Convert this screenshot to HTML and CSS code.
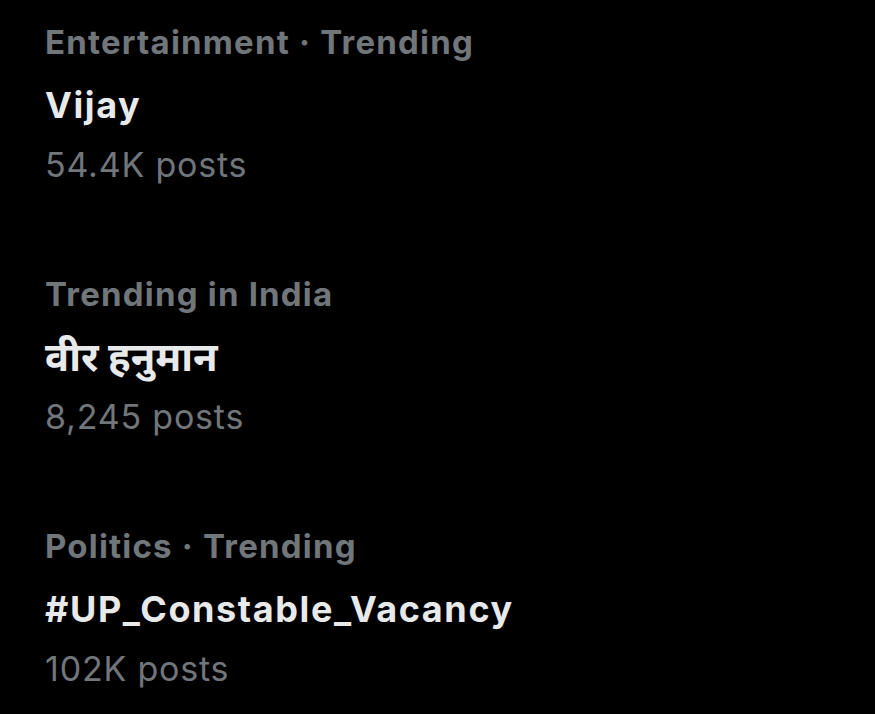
FILE: index.html
```html
<!DOCTYPE html>
<html lang="en">
<head>
<meta charset="utf-8">
<link rel="stylesheet" href="styles.css">
</head>
<body>
<main class="trends">
  <section class="trend">
    <div class="meta">Entertainment · Trending</div>
    <div class="title">Vijay</div>
    <div class="count">54.4K posts</div>
  </section>
  <section class="trend">
    <div class="meta">Trending in India</div>
    <div class="title"><span class="deva" lang="hi">वीर हनुमान</span></div>
    <div class="count">8,245 posts</div>
  </section>
  <section class="trend">
    <div class="meta">Politics · Trending</div>
    <div class="title">#UP_Constable_Vacancy</div>
    <div class="count">102K posts</div>
  </section>
</main>
</body>
</html>
```
FILE: styles.css
```css
html, body {
  margin: 0;
  background: #000;
}
.trends {
  padding: 12px 0 0 45px;
  display: flex;
  flex-direction: column;
  gap: 70px;
}
.meta {
  font-family: "Inter", "Noto Sans", sans-serif;
  font-weight: 700;
  font-size: 33px;
  letter-spacing: 1.2px;
  line-height: 60px;
  color: #71767b;
  white-space: nowrap;
}
.title {
  font-family: "Inter", "Noto Sans", sans-serif;
  font-weight: 700;
  font-size: 36px;
  letter-spacing: 1.6px;
  line-height: 66px;
  height: 64px;
  color: #e7e9ea;
  white-space: nowrap;
}
.deva {
  font-size: 40px;
  letter-spacing: 0;
}
.count {
  font-family: "Inter", "Noto Sans", sans-serif;
  font-weight: 400;
  font-size: 34px;
  letter-spacing: 0.8px;
  line-height: 58px;
  color: #71767b;
  white-space: nowrap;
}
```
